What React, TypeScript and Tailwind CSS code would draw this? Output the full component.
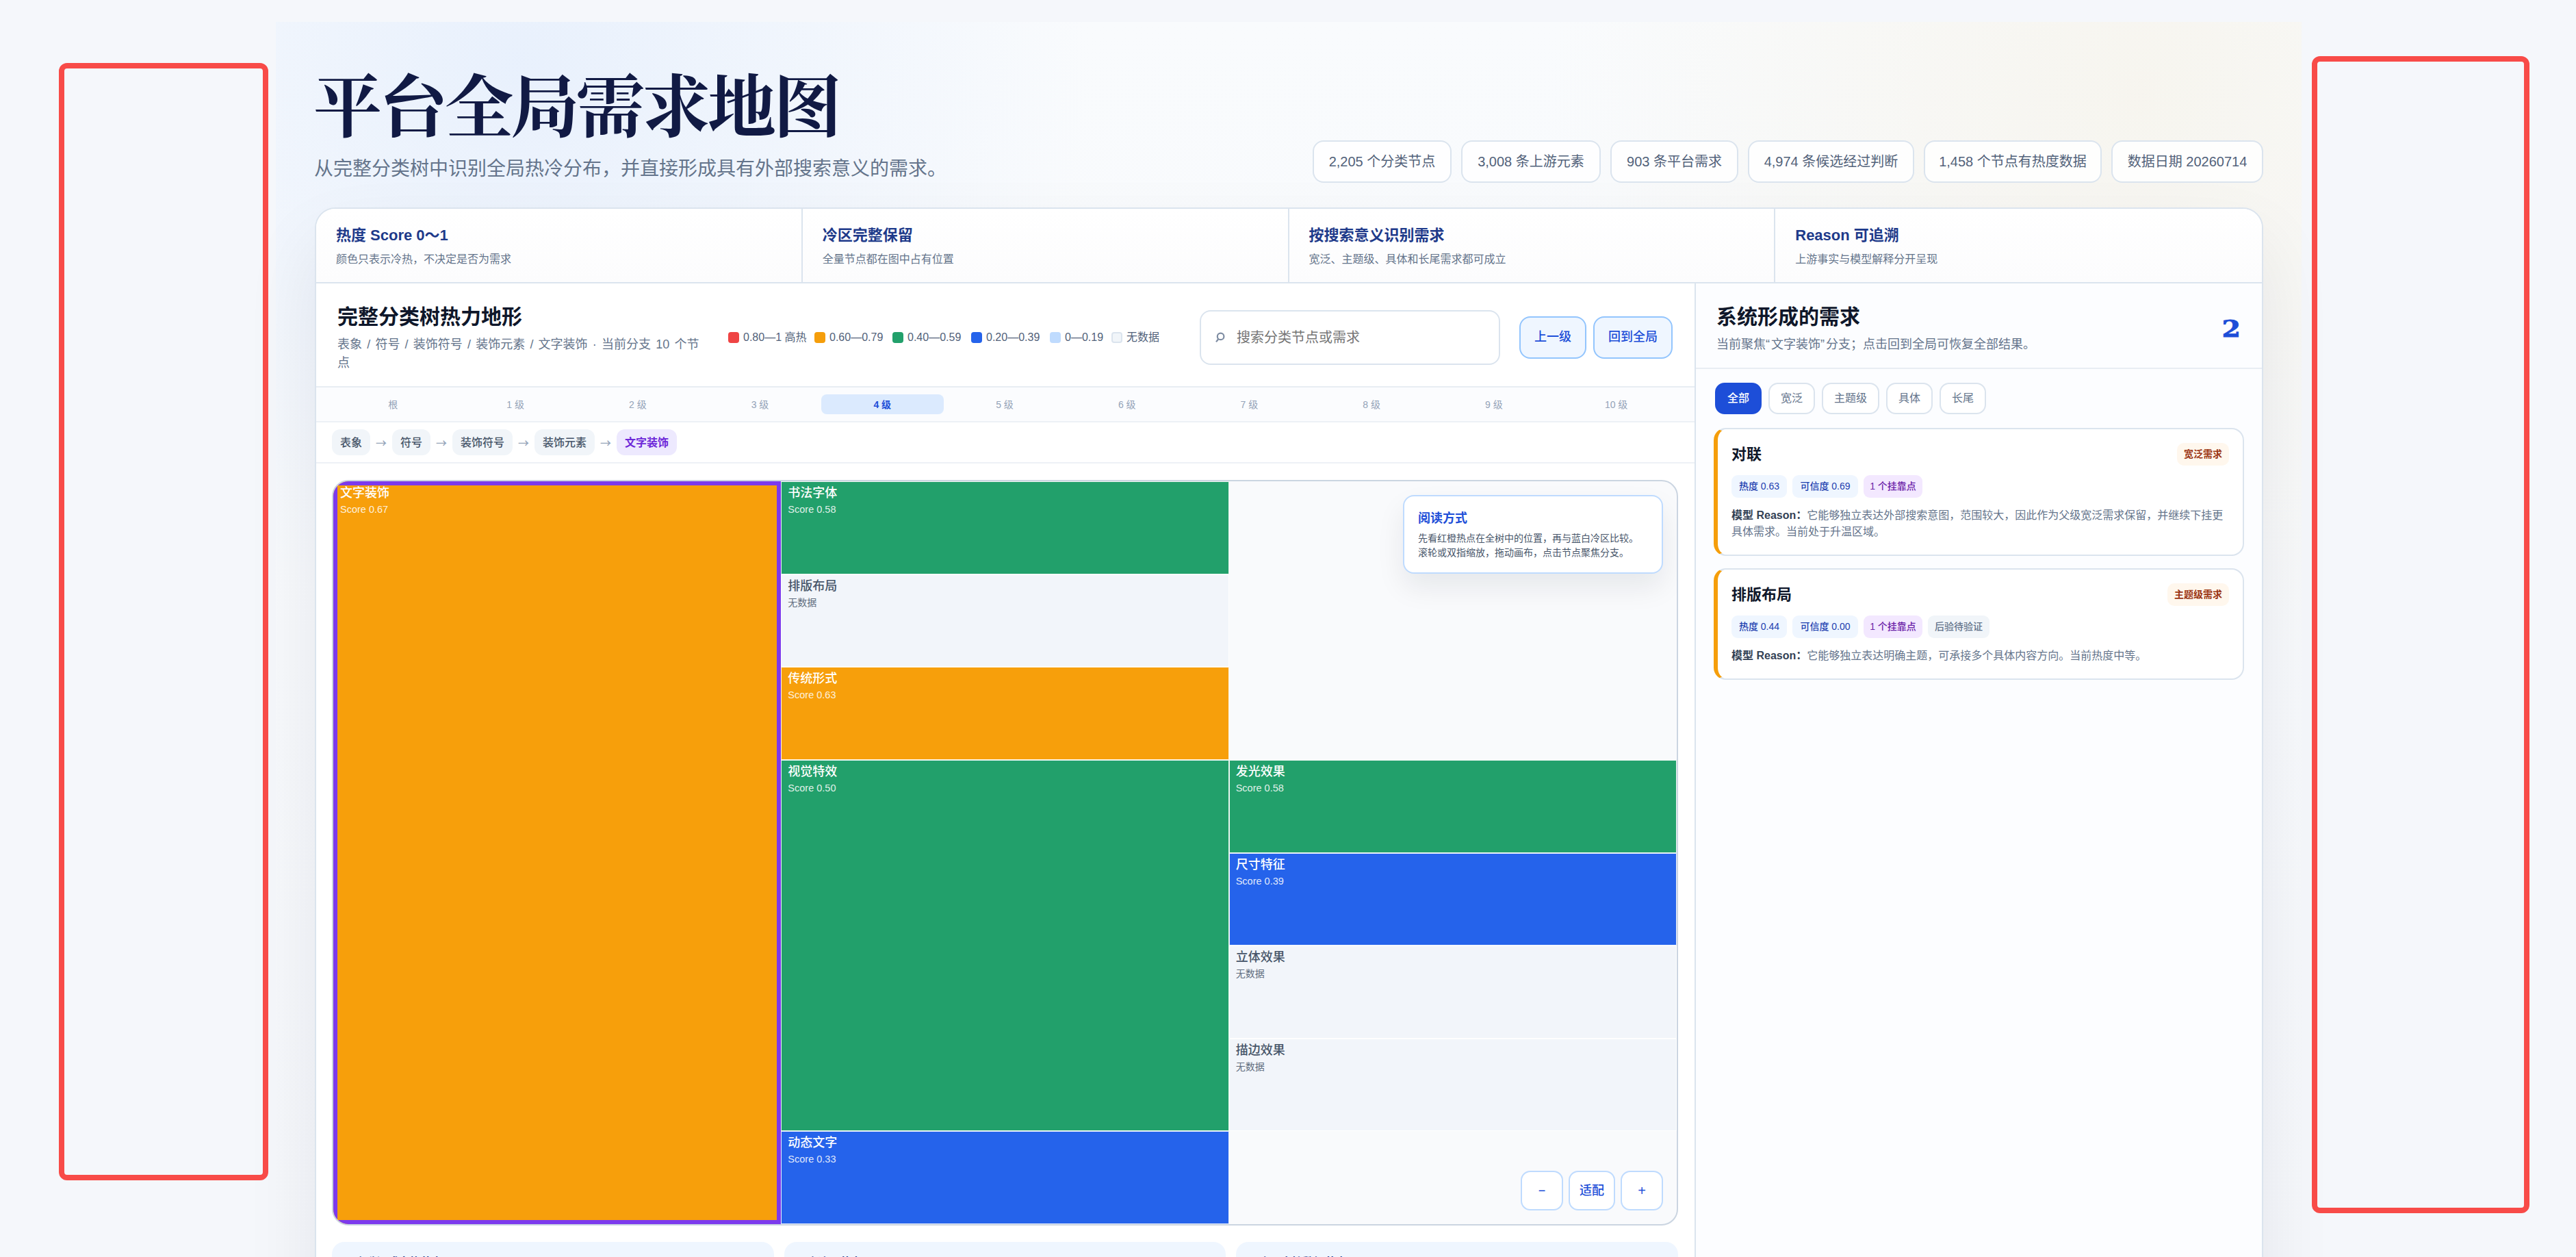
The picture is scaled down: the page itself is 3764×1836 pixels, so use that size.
import React from "react";

const stats = [
  { text: "2,205 个分类节点", w: "w-[203px]" },
  { text: "3,008 条上游元素", w: "w-[204px]" },
  { text: "903 条平台需求", w: "w-[187px]" },
  { text: "4,974 条候选经过判断", w: "w-[243px]" },
  { text: "1,458 个节点有热度数据", w: "w-[260px]" },
  { text: "数据日期 20260714", w: "w-[222px]" },
];

const features = [
  ["热度 Score 0～1", "颜色只表示冷热，不决定是否为需求"],
  ["冷区完整保留", "全量节点都在图中占有位置"],
  ["按搜索意义识别需求", "宽泛、主题级、具体和长尾需求都可成立"],
  ["Reason 可追溯", "上游事实与模型解释分开呈现"],
];

const legend = [
  { text: "0.80—1 高热", color: "bg-[#ef4444]", w: "w-[126px]" },
  { text: "0.60—0.79", color: "bg-[#f59e0b]", w: "w-[114px]" },
  { text: "0.40—0.59", color: "bg-[#22a06b]", w: "w-[115px]" },
  { text: "0.20—0.39", color: "bg-[#2563eb]", w: "w-[115px]" },
  { text: "0—0.19", color: "bg-[#bfdbfe]", w: "w-[90px]" },
  { text: "无数据", color: "bg-[#f1f5f9] border-2 border-[#dbe4ee]", w: "w-[70px]" },
];

const levels = ["根", "1 级", "2 级", "3 级", "4 级", "5 级", "6 级", "7 级", "8 级", "9 级", "10 级"];
const crumbs = ["表象", "符号", "装饰符号", "装饰元素", "文字装饰"];

const GREEN = "bg-[#22a06b] text-white";
const ORANGE = "bg-[#f79f0b] text-white";
const BLUE = "bg-[#2563eb] text-white";
const EMPTY = "bg-[#f2f5fa] text-[#475569]";

const cells = [
  { name: "书法字体", sub: "Score 0.58", tone: GREEN, pos: "col-start-2 row-start-1" },
  { name: "排版布局", sub: "无数据", tone: EMPTY, pos: "col-start-2 row-start-2" },
  { name: "传统形式", sub: "Score 0.63", tone: ORANGE, pos: "col-start-2 row-start-3" },
  { name: "视觉特效", sub: "Score 0.50", tone: GREEN, pos: "col-start-2 row-start-4 row-span-4" },
  { name: "动态文字", sub: "Score 0.33", tone: BLUE, pos: "col-start-2 row-start-8" },
  { name: "发光效果", sub: "Score 0.58", tone: GREEN, pos: "col-start-3 row-start-4" },
  { name: "尺寸特征", sub: "Score 0.39", tone: BLUE, pos: "col-start-3 row-start-5" },
  { name: "立体效果", sub: "无数据", tone: EMPTY, pos: "col-start-3 row-start-6" },
  { name: "描边效果", sub: "无数据", tone: EMPTY, pos: "col-start-3 row-start-7" },
];

const filters = [
  { text: "全部", w: "w-[68px]" },
  { text: "宽泛", w: "w-[68px]" },
  { text: "主题级", w: "w-[84px]" },
  { text: "具体", w: "w-[68px]" },
  { text: "长尾", w: "w-[68px]" },
];

const demands = [
  {
    title: "对联",
    tag: "宽泛需求",
    tagW: "w-[76px]",
    heat: "热度 0.63",
    trust: "可信度 0.69",
    pending: false,
    reason: "它能够独立表达外部搜索意图，范围较大，因此作为父级宽泛需求保留，并继续下挂更具体需求。当前处于升温区域。",
  },
  {
    title: "排版布局",
    tag: "主题级需求",
    tagW: "w-[90px]",
    heat: "热度 0.44",
    trust: "可信度 0.00",
    pending: true,
    reason: "它能够独立表达明确主题，可承接多个具体内容方向。当前热度中等。",
  },
];

function CellText({ name, sub }: { name: string; sub: string }) {
  return (
    <>
      <div className="text-[18px] leading-[24px] font-medium">{name}</div>
      <div className={"leading-[24px] opacity-85 " + (sub === "无数据" ? "text-[14px]" : "text-[14.5px]")}>{sub}</div>
    </>
  );
}

function Header() {
  return (
    <header className="flex h-[271px] items-start justify-between">
      <div className="pt-[63px]">
        <h1 className="-ml-[2px] h-[108px] whitespace-nowrap font-['Songti_SC','Noto_Serif_CJK_SC','Noto_Sans_CJK_SC',serif] text-[100px] leading-[108px] font-bold tracking-[-4px] text-[#111a44]">
          平台全局需求地图
        </h1>
        <p className="mt-[26px] -ml-px text-[28px] leading-[36px] whitespace-nowrap text-[#64748b]">
          从完整分类树中识别全局热冷分布，并直接形成具有外部搜索意义的需求。
        </p>
      </div>
      <div className="mt-[173px] flex gap-[14px]">
        {stats.map((s) => (
          <span
            key={s.text}
            className={"flex h-[62px] items-center justify-center rounded-[16px] border-2 border-[#dbe4ee] bg-white/85 text-[20px] whitespace-nowrap text-[#52627a] " + s.w}
          >
            {s.text}
          </span>
        ))}
      </div>
    </header>
  );
}

function Toolbar() {
  return (
    <div className="flex h-[152px] items-center border-b-2 border-[#e8edf3] pr-[32px] pl-[31px]">
      <div className="w-[540px] shrink-0 self-start pt-[29px]">
        <h2 className="text-[30px] leading-[40px] font-bold text-[#0f172a]">完整分类树热力地形</h2>
        <p className="mt-[7px] text-[18px] leading-[27px] [word-spacing:2.2px] text-[#64748b]">
          表象 / 符号 / 装饰符号 / 装饰元素 / 文字装饰 · 当前分支 10 个节点
        </p>
      </div>
      <div className="mt-[7px] flex w-[689px] shrink-0 pl-[31px] text-[16px] whitespace-nowrap text-[#52627a]">
        {legend.map((l) => (
          <span key={l.text} className={"flex shrink-0 items-center gap-[6px] " + l.w}>
            <i className={"size-4 shrink-0 rounded-[4px] " + l.color} />
            {l.text}
          </span>
        ))}
      </div>
      <div className="mt-[7px] ml-auto flex h-[80px] w-[439px] items-center gap-[16px] rounded-[16px] border-2 border-[#dbe4ee] bg-white pl-[20px] text-[20px] text-[#757575]">
        <svg viewBox="0 0 16 18" className="h-[18px] w-[16px]" fill="none" stroke="#7f8da3" strokeWidth="2.2">
          <circle cx="8.6" cy="7.4" r="4.8" />
          <path d="M5.4 11 2 15.4" />
        </svg>
        搜索分类节点或需求
      </div>
      <div className="mt-[7px] ml-[28px] flex gap-[10px] text-[18px] font-medium text-[#1d4ed8]">
        <button className="h-[62px] w-[98px] rounded-[16px] border-2 border-[#93c5fd] bg-[#eff6ff]">上一级</button>
        <button className="h-[62px] w-[116px] rounded-[16px] border-2 border-[#93c5fd] bg-[#eff6ff]">回到全局</button>
      </div>
    </div>
  );
}

function TreeMap() {
  return (
    <div className="relative mt-[24px] mr-[24px] ml-[23px] h-[1089px] overflow-hidden rounded-[24px] border-2 border-[#cbd5e1] bg-[#f9fafc]">
      <div className="grid h-full grid-cols-3 grid-rows-8">
        <div className="col-start-1 row-span-8 row-start-1 border-[6px] border-[#7c3aed] bg-[#f79f0b] pl-[4px] text-white">
          <div className="-mt-px">
            <CellText name="文字装饰" sub="Score 0.67" />
          </div>
        </div>
        {cells.map((c) => (
          <div key={c.name} className={"border border-white/90 pt-[4px] pl-[9px] " + c.tone + " " + c.pos}>
            <CellText name={c.name} sub={c.sub} />
          </div>
        ))}
      </div>
      <div className="absolute top-[20px] right-[20px] h-[115px] w-[380px] rounded-[16px] border-2 border-[#bfdbfe] bg-white pt-[19px] pl-[20px] shadow-[0_20px_40px_rgba(15,23,42,0.08)]">
        <div className="text-[18px] leading-[26px] font-bold text-[#1d4ed8]">阅读方式</div>
        <p className="mt-[6px] text-[14px] leading-[21px] whitespace-nowrap text-[#475569]">
          先看红橙热点在全树中的位置，再与蓝白冷区比较。
          <br />
          滚轮或双指缩放，拖动画布，点击节点聚焦分支。
        </p>
      </div>
      <div className="absolute right-[20px] bottom-[20px] flex gap-[8px] text-[18px] font-medium text-[#1d4ed8]">
        <button className="h-[58px] w-[62px] rounded-[14px] border-2 border-[#bfdbfe] bg-white">−</button>
        <button className="h-[58px] w-[68px] rounded-[14px] border-2 border-[#bfdbfe] bg-white">适配</button>
        <button className="h-[58px] w-[62px] rounded-[14px] border-2 border-[#bfdbfe] bg-white text-[20px]">+</button>
      </div>
    </div>
  );
}

function MapPanel() {
  return (
    <section className="w-[2014px] shrink-0 bg-white">
      <Toolbar />
      <div className="grid h-[51px] grid-cols-11 items-center border-b-2 border-[#edf1f6] bg-[#fbfcfe] pr-[25px] pl-[23px] text-center text-[14px] text-[#94a3b8]">
        {levels.map((l) => (
          <span
            key={l}
            className={"h-[29px] rounded-[8px] leading-[30px] " + (l === "4 级" ? "bg-[#dbeafe] font-bold text-[#1d4ed8]" : "")}
          >
            {l}
          </span>
        ))}
      </div>
      <div className="flex h-[60px] items-center border-b-2 border-[#edf1f6] pl-[23px] text-[16px] font-medium">
        {crumbs.map((c, i) => (
          <React.Fragment key={c}>
            {i > 0 && (
              <span className="w-[32px] text-center font-['Noto_Sans_CJK_SC',sans-serif] leading-[38px] text-[#94a3b8]">→</span>
            )}
            <span
              className={
                "h-[38px] rounded-[12px] px-[12px] leading-[39px] " +
                (i === 4 ? "bg-[#ede9fe] font-bold text-[#6d28d9]" : "bg-[#f1f5f9] text-[#475569]")
              }
            >
              {c}
            </span>
          </React.Fragment>
        ))}
      </div>
      <TreeMap />
      <div className="mt-[24px] mr-[24px] ml-[23px] grid h-[120px] grid-cols-3 gap-[15px] text-[16px] leading-[24px] font-bold text-[#1e3a8a]">
        <div className="rounded-[18px] bg-[#eff6ff] pt-[18px] pl-[20px]">4 个升温或高热节点</div>
        <div className="rounded-[18px] bg-[#eff6ff] pt-[18px] pl-[20px]">2 个冷区节点</div>
        <div className="rounded-[18px] bg-[#eff6ff] pt-[18px] pl-[20px]">4 个无直接数据节点</div>
      </div>
    </section>
  );
}

function DemandPanel() {
  return (
    <aside className="flex-1 border-l-2 border-[#dbe4ee] bg-[#fcfdff]">
      <div className="flex h-[125px] justify-between border-b-2 border-[#e8edf3] pr-[31px] pl-[30px]">
        <div className="pt-[29px]">
          <h2 className="text-[30px] leading-[40px] font-bold text-[#0f172a]">系统形成的需求</h2>
          <p className="mt-[7px] text-[18px] leading-[27px] whitespace-nowrap text-[#64748b]">
            当前聚焦<span className="tracking-[2px]">“</span>文字装饰<span className="tracking-[2px]">”</span>
            分支；点击回到全局可恢复全部结果。
          </p>
        </div>
        <span className="origin-right scale-x-120 pt-[47px] font-['DejaVu_Serif',serif] text-[33px] leading-[40px] font-black text-[#1d4ed8] [-webkit-text-stroke:0.8px_#1d4ed8]">
          2
        </span>
      </div>
      <div className="flex gap-[10px] pt-[20px] pl-[28px] text-[16px]">
        {filters.map((f, i) => (
          <button
            key={f.text}
            className={
              "h-[46px] rounded-[14px] border-2 " +
              f.w +
              (i === 0 ? " border-[#1d4ed8] bg-[#1d4ed8] font-medium text-white" : " border-[#dbe4ee] bg-white text-[#64748b]")
            }
          >
            {f.text}
          </button>
        ))}
      </div>
      <div className="mt-[20px] flex flex-col gap-[18px] px-[26px]">
        {demands.map((d) => (
          <article
            key={d.title}
            className="rounded-[18px] border-2 border-l-[6px] border-[#dbe4ee] border-l-[#f59e0b] bg-white px-[20px] pt-[20px] pb-[21px]"
          >
            <div className="flex h-[33px] items-center justify-between">
              <h3 className="text-[22px] leading-[30px] font-bold text-[#0f172a]">{d.title}</h3>
              <span className={"h-[33px] rounded-[10px] bg-[#fff7ed] text-center text-[14px] leading-[33px] font-bold text-[#9a3412] " + d.tagW}>
                {d.tag}
              </span>
            </div>
            <div className="mt-[14px] flex h-[33px] gap-[8px] text-center text-[14px] leading-[33px] font-medium">
              <span className="w-[81px] rounded-[9px] bg-[#eff6ff] text-[#1e40af]">{d.heat}</span>
              <span className="w-[96px] rounded-[9px] bg-[#eff6ff] text-[#1e40af]">{d.trust}</span>
              <span className="w-[86px] rounded-[9px] bg-[#f3e8ff] text-[#6b21a8]">1 个挂靠点</span>
              {d.pending && <span className="w-[90px] rounded-[9px] bg-[#f1f5f9] text-[#64748b]">后验待验证</span>}
            </div>
            <p className="mt-[14px] text-[16px] leading-[24px] text-[#64748b]">
              <b className="text-[#334155]">模型 Reason：</b>
              {d.reason}
            </p>
          </article>
        ))}
      </div>
    </aside>
  );
}

export default function App() {
  return (
    <div className="relative h-[1836px] w-[3764px] overflow-hidden bg-[#f5f7fb] pt-[32px] font-['Liberation_Sans','Noto_Sans_CJK_SC',sans-serif]">
      <div className="ml-[403px] h-[1804px] w-[2960px] bg-[radial-gradient(circle_at_12%_3%,rgba(219,232,252,0.55),rgba(219,232,252,0)_830px),radial-gradient(circle_at_92%_6%,rgba(246,243,234,0.75),rgba(246,243,234,0)_860px),linear-gradient(180deg,#f9fbfd,#f5f7fb)] pr-[56px] pl-[57px]">
        <Header />
        <main className="h-[1700px] overflow-hidden rounded-[30px] border-2 border-[#dbe4ee] bg-white shadow-[0_52px_110px_rgba(15,23,42,0.08)]">
          <div className="grid h-[109px] grid-cols-4 border-b-2 border-[#dbe4ee] bg-linear-to-b from-white to-[#fcfcfd]">
            {features.map(([title, desc], i) => (
              <div key={title} className={"border-[#dbe4ee] pt-[23px] pl-[29px] " + (i < 3 ? "border-r-2" : "")}>
                <div className="text-[22px] leading-[32px] font-bold text-[#1e3a8a]">{title}</div>
                <div className="mt-[7px] text-[16px] leading-[24px] text-[#64748b]">{desc}</div>
              </div>
            ))}
          </div>
          <div className="flex h-[1600px]">
            <MapPanel />
            <DemandPanel />
          </div>
        </main>
      </div>
      <div className="absolute top-[92px] left-[86px] h-[1632px] w-[306px] rounded-[12px] border-8 border-[#f84b48]" />
      <div className="absolute top-[82px] left-[3378px] h-[1690px] w-[318px] rounded-[12px] border-8 border-[#f84b48]" />
    </div>
  );
}
